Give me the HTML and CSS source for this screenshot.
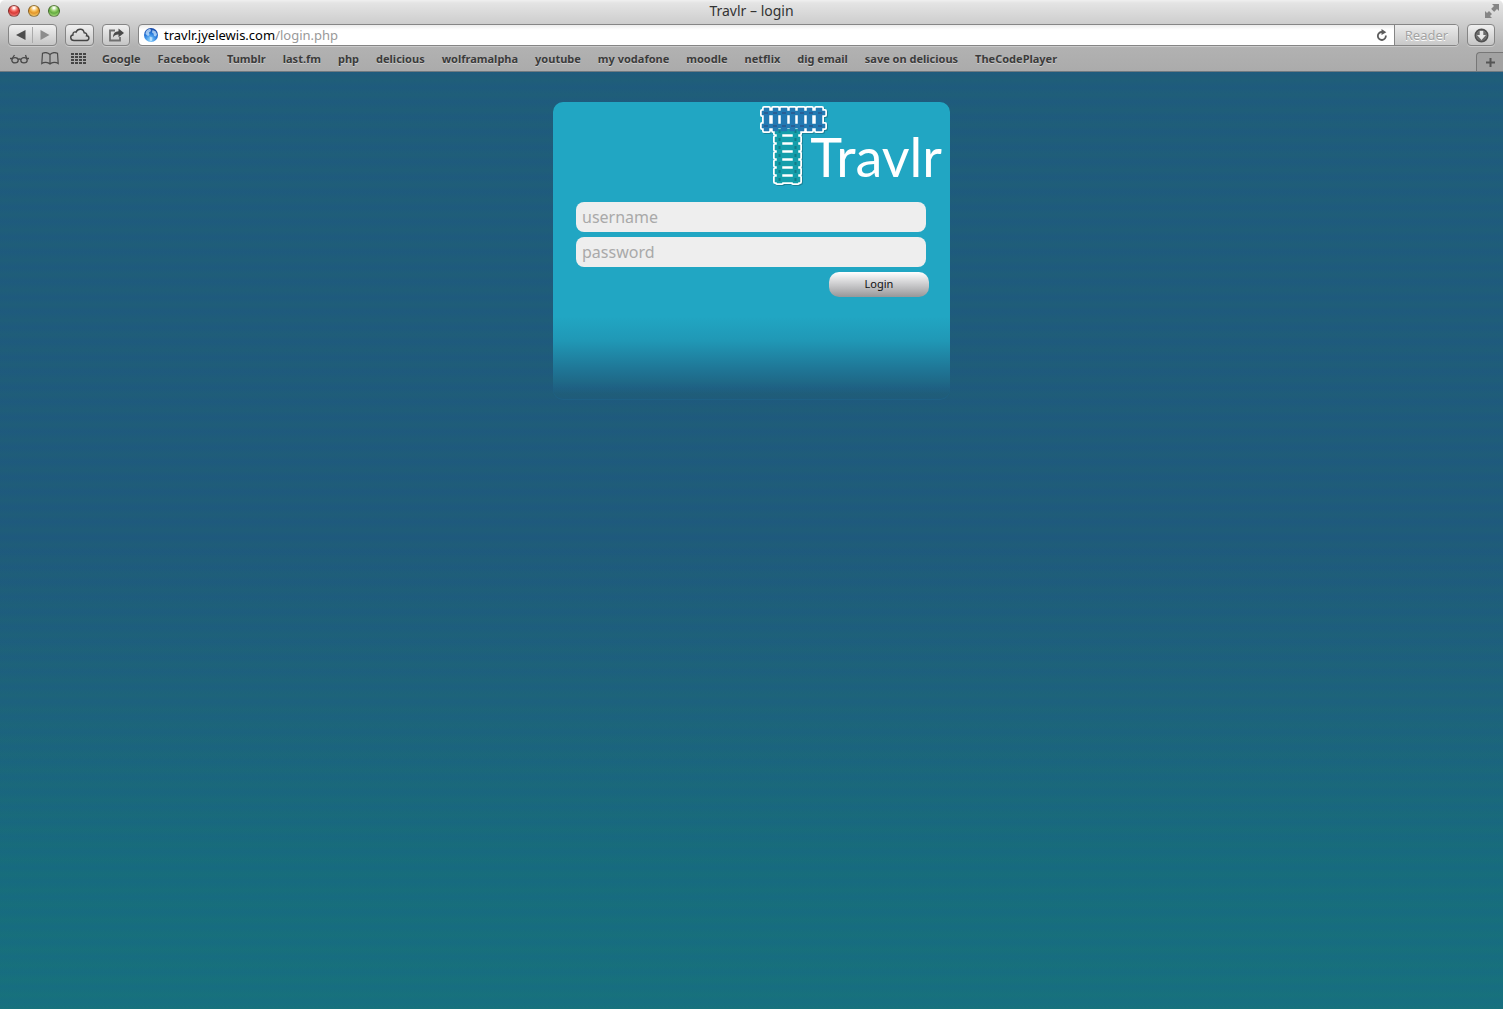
FILE: index.html
```html
<!DOCTYPE html>
<html lang="en">
<head>
<meta charset="utf-8">
<title>Travlr – login</title>
<link rel="stylesheet" href="styles.css">
</head>
<body>
<header class="chrome">
  <div class="titlebar">
    <div class="lights">
      <button class="light light-red" aria-label="Close"></button>
      <button class="light light-yellow" aria-label="Minimize"></button>
      <button class="light light-green" aria-label="Zoom"></button>
    </div>
    <h1 class="title">Travlr – login</h1>
    <button class="fullscreen" aria-label="Full screen">
      <svg width="14" height="14" viewBox="0 0 14 14" fill="#858585"><path d="M7 0h7v7l-2-2-3 3-3-3 3-3zM0 7l2 2 2-2 3 3-2 2 2 2H0z"/><path d="M5.500 5l4 4" stroke="#dcdcdc" stroke-width="1"/></svg>
    </button>
  </div>
  <nav class="toolbar" aria-label="Browser">
    <div class="history">
      <button aria-label="Back"><svg width="10" height="10" viewBox="0 0 10 10"><path d="M9.500 0v10L0 5z" fill="#4c4c4c"/></svg></button>
      <button aria-label="Forward"><svg width="10" height="10" viewBox="0 0 10 10"><path d="M.5 0v10L9.500 5z" fill="#8c8c8c"/></svg></button>
    </div>
    <button class="tool tool-wide" aria-label="iCloud tabs">
      <svg width="20" height="14" viewBox="0 0 20 14"><path d="M4 12.500C0 12.500-.3 7.500 3 7 2.600 4.200 4.800 3.400 6 4.200 7.500.2 13.500.1 14.200 4.800 17 5 17 7 16.500 7.800 20 8.200 19.500 12.500 16 12.500z" fill="none" stroke="#444" stroke-width="1.400"/></svg>
    </button>
    <button class="tool" aria-label="Share">
      <svg width="17" height="14" viewBox="0 0 17 14"><path d="M7 2.500H2v10h10V9" fill="none" stroke="#707070" stroke-width="1.800"/><path d="M5 9.500C5.200 5.300 7 3.500 10.500 3.300V.5L16 5l-5.500 4.300V6.500C8 6.400 6.500 7.200 5 9.500z" fill="#4a4a4a"/></svg>
    </button>
    <div class="address">
      <svg width="14" height="14" viewBox="0 0 14 14"><defs><radialGradient id="globe" cx=".45" cy=".85" r=".9"><stop offset="0" stop-color="#8fd7ff"/><stop offset=".5" stop-color="#2b7fdf"/><stop offset="1" stop-color="#123d9c"/></radialGradient></defs><circle cx="7" cy="7" r="7" fill="url(#globe)"/><path d="M2 3.500C3 1.500 5 1 6.500 1L7 3 5 4.500 5.500 7 4 8 1.500 6zM8.500 2l3 1.200 1.500 3-1 2.300-2-.5-.5-2.500-1.500-1zM5.500 8.500l3 1-.5 3-1.500 1z" fill="#d5ecff" opacity=".7"/></svg>
      <div class="url" role="textbox" tabindex="0" aria-label="Address">travlr.jyelewis.com<span class="path">/login.php</span></div>
      <button class="reload" aria-label="Reload"><svg width="12" height="12" viewBox="0 0 12 12"><path d="M9.800 6.500A4 4 0 1 1 6 3" fill="none" stroke="#5c5c5c" stroke-width="1.800"/><path d="M5.500 0L10.300 3.200 5.500 6z" fill="#5c5c5c"/></svg></button>
      <button class="reader" disabled>Reader</button>
    </div>
    <button class="tool" aria-label="Downloads">
      <svg width="15" height="15" viewBox="0 0 15 15"><circle cx="7.500" cy="7.500" r="6" fill="none" stroke="#505050" stroke-width="2"/><circle cx="7.500" cy="7.500" r="5.200" fill="#6a6a6a"/><path d="M5.700 3h3.600v4h2.700l-4.500 5L3 7h2.700z" fill="#e8e8e8"/></svg>
    </button>
  </nav>
  <nav class="bookmarks" aria-label="Bookmarks">
    <div class="bookmark-icons">
      <button aria-label="Reading list"><svg width="19" height="10" viewBox="0 0 19 10" fill="none" stroke="#4a4a4a" stroke-width="1.300"><ellipse cx="5" cy="6.300" rx="3.200" ry="2.600"/><ellipse cx="14" cy="6.300" rx="3.200" ry="2.600"/><path d="M8 5.500q1.500-1 3 0M0 4.500h2.500M16.500 4.500H19M2.500 4l2-3M16.500 4l-1-3"/></svg></button>
      <button aria-label="All bookmarks"><svg width="18" height="13" viewBox="0 0 18 13" fill="none" stroke="#4a4a4a" stroke-width="1.200"><path d="M9 2.500C7 .3 4 .3 1.500 1.200L.8 11.500C3 10 7 10 9 12c2-2 6-2 8.200-.5L16.500 1.200C14 .3 11 .3 9 2.500zM9 2.500V12"/></svg></button>
      <button aria-label="Top sites"><svg width="15" height="11" viewBox="0 0 15 11" stroke="#444" stroke-width="2" stroke-dasharray="3 1"><path d="M0 1h15M0 4h15M0 7h15M0 10h15"/></svg></button>
    </div>
    <a href="#">Google</a>
    <a href="#">Facebook</a>
    <a href="#">Tumblr</a>
    <a href="#">last.fm</a>
    <a href="#">php</a>
    <a href="#">delicious</a>
    <a href="#">wolframalpha</a>
    <a href="#">youtube</a>
    <a href="#">my vodafone</a>
    <a href="#">moodle</a>
    <a href="#">netflix</a>
    <a href="#">dig email</a>
    <a href="#">save on delicious</a>
    <a href="#">TheCodePlayer</a>
    <button class="new-tab" aria-label="New tab"><svg width="9" height="9" viewBox="0 0 9 9"><path d="M4.500 0v9M0 4.500h9" stroke="#555" stroke-width="2"/></svg></button>
  </nav>
</header>
<main class="page">
  <form class="card">
    <div class="logo">
      <svg width="68" height="82" viewBox="0 0 68 82" aria-hidden="true">
        <defs>
          <g id="across"><path d="M2 6h63v4H2zM2 19h63v4H2z"/><path d="M4 3h5v23H4zM13 3h5v23h-5zM21 3h6v23h-6zM30 3h5v23h-5zM38 3h6v23h-6zM47 3h5v23h-5zM56 3h6v23h-6z"/></g>
          <g id="down"><path d="M17 25h5v53h-5zM33 25h5v53h-5z"/><path d="M15 24h25v5H15zM15 32h25v5H15zM15 40h25v5H15zM15 48h25v5H15zM15 56h25v5H15zM15 64h25v5H15zM15 72h25v5H15z"/></g>
        </defs>
        <g transform="translate(1 1)" fill="#14606f" stroke="#14606f" stroke-width="4" stroke-linejoin="round" opacity=".5"><use href="#down"/><use href="#across"/></g>
        <g fill="#fff" stroke="#fff" stroke-width="4" stroke-linejoin="round"><use href="#down"/><use href="#across"/></g>
        <path d="M9 10h47v9H9zM22 29h11v43H22z" fill="#fff"/>
        <g fill="#159eab" stroke="#159eab" stroke-width=".5"><use href="#down"/></g>
        <path d="M19.500 25v53M35.500 25v53" stroke="#137b87" stroke-width="2" stroke-dasharray="3 5"/>
        <g fill="#2379b3" stroke="#2379b3" stroke-width=".5"><use href="#across"/></g>
        <path d="M4 8h60M4 21h60" stroke="#2a5f95" stroke-width="2" stroke-dasharray="4 5"/>
      </svg>
      <span class="wordmark">Travlr</span>
    </div>
    <input class="field" type="text" placeholder="username" aria-label="username">
    <input class="field" type="password" placeholder="password" aria-label="password">
    <button class="login" type="button">Login</button>
  </form>
</main>
</body>
</html>
```

FILE: styles.css
```css
* { box-sizing: border-box; }
body {
  margin: 0;
  min-height: 100vh;
  display: flex;
  flex-direction: column;
  font-family: "Lucida Grande", "Noto Sans", "Open Sans", sans-serif;
  color: #333;
}
button {
  margin: 0;
  padding: 0;
  border: 0;
  background: none;
  font: inherit;
  color: inherit;
  display: flex;
  align-items: center;
  justify-content: center;
}
svg { display: block; flex: none; }

.chrome {
  background: linear-gradient(#f0f0f0, #e4e4e4 3px, #cdcdcd 24px, #b2b2b2 46px, #ababab);
  border-bottom: 1px solid #6f7a80;
  border-radius: 5px 5px 0 0;
}
.titlebar {
  display: grid;
  grid-template-columns: 1fr auto 1fr;
  align-items: center;
  height: 24px;
  padding: 0 4px 2px;
}
.lights { display: flex; gap: 8px; padding-left: 4px; }
.light {
  width: 12px;
  height: 12px;
  border-radius: 50%;
  border: 1px solid #0006;
}
.light-red { background: radial-gradient(circle at 50% 20%, #fff 5%, #f4675f 35%, #d73b38 55%, #ff9a94); }
.light-yellow { background: radial-gradient(circle at 50% 20%, #fff 5%, #f6bd55 35%, #e2952a 55%, #ffe58a); }
.light-green { background: radial-gradient(circle at 50% 20%, #fff 5%, #93cd67 35%, #64ab40 55%, #c8f59a); }
.title {
  margin: 0;
  font-size: 14px;
  line-height: 20px;
  font-weight: 400;
}
.fullscreen { justify-self: end; }

.toolbar {
  display: flex;
  gap: 8px;
  height: 22px;
  padding: 0 8px;
}
.history, .tool {
  border: 1px solid #858585;
  border-radius: 4px;
  background: linear-gradient(#f0f0f0, #c5c5c5);
  box-shadow: 0 1px 0 #ffffff55;
}
.history { display: flex; width: 49px; padding: 2px 0; }
.history button { flex: 1; }
.history button + button { border-left: 1px solid #aaa; }
.tool { width: 28px; }
.tool-wide { width: 29px; }
.address {
  flex: 1;
  display: flex;
  align-items: center;
  gap: 6px;
  padding-left: 5px;
  border: 1px solid #858585;
  border-radius: 4px;
  background: linear-gradient(#ececec, #fff 5px);
  box-shadow: 0 1px 0 #ffffff55;
}
.url {
  flex: 1;
  font-size: 13px;
  line-height: 20px;
  color: #000;
}
.path { color: #999; }
.reader {
  align-self: stretch;
  width: 64px;
  border-left: 1px solid #858585;
  border-radius: 0 3px 3px 0;
  background: linear-gradient(#ebebeb, #c8c8c8);
  font-size: 13px;
  color: #a3a3a3;
  text-shadow: 0 1px 0 #fff;
}

.bookmarks {
  display: flex;
  align-items: center;
  gap: 17px;
  height: 25px;
  padding-left: 10px;
}
.bookmarks a {
  font-size: 11px;
  line-height: 16px;
  font-weight: 700;
  white-space: nowrap;
  color: #3b3b3b;
  text-decoration: none;
  text-shadow: 0 1px 0 #ffffff66;
}
.bookmark-icons { display: flex; align-items: center; gap: 12px; }
.bookmark-icons button:last-child { margin-right: -1px; }
.new-tab {
  align-self: flex-end;
  width: 27px;
  height: 19px;
  margin-left: auto;
  border: 1px solid #777;
  border-width: 1px 0 0 1px;
  border-radius: 4px 0 0 0;
  background: #a2a2a2;
}

.page {
  flex: 1;
  padding: 30px 16px;
  background:
    repeating-linear-gradient(#1c558a28 0, #1f6a6c28 8px, #1c558a28 15px),
    linear-gradient(#1f5c7b, #1f5a7b 50%, #1d637c 67%, #166e7e 85%, #16737f);
}
.card {
  display: flex;
  flex-direction: column;
  align-items: flex-start;
  gap: 5px;
  width: 100%;
  max-width: 397px;
  min-height: 298px;
  margin: 0 auto;
  padding: 3px 21px 0 23px;
  border-radius: 10px;
  background: linear-gradient(#21a6c3 72%, #2098b6 80%, #1f7595 90%, #1f5d8000 98%);
  box-shadow: inset 0 -1px 0 #1e6a9466;
}
.logo {
  display: flex;
  align-self: flex-end;
  margin-right: -13px;
  padding-bottom: 10px;
}
.wordmark {
  margin: 22px 0 0 -18px;
  font-family: "Century Gothic", Lato, sans-serif;
  font-size: 54px;
  line-height: 60px;
  font-weight: 400;
  color: #fff;
}
.field {
  width: 100%;
  max-width: 350px;
  height: 30px;
  padding: 0 6px;
  border: 0;
  border-radius: 8px;
  background: #eee;
  font-family: inherit;
  font-size: 16px;
  color: #333;
}
.field::placeholder { color: #a9a9a9; opacity: 1; }
.login {
  align-self: flex-end;
  width: 100px;
  height: 25px;
  padding-bottom: 2px;
  border-radius: 10px;
  background: linear-gradient(#fff, #d0d0d2 45%, #979799);
  font-size: 11px;
  color: #111;
}
```
